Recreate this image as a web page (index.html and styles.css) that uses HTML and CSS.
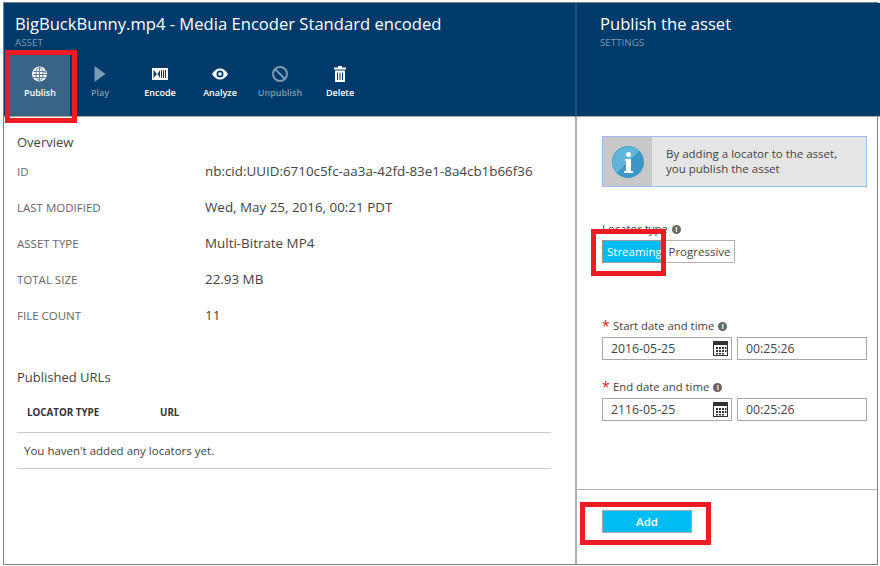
FILE: index.html
```html
<!DOCTYPE html>
<html>
<head>
<meta charset="utf-8"/>
<title>Publish the asset</title>
<link rel="stylesheet" href="styles.css">
</head>
<body>
<div class="frame">
  <section class="blade asset">
    <header class="head">
      <h1>BigBuckBunny.mp4 - Media Encoder Standard encoded</h1>
      <div class="sub">ASSET</div>
      <div class="cmds">
        <div class="cmd on">
          <svg width="20" height="18" viewBox="0 0 20 18"><circle cx="9.500" cy="9" r="7.500" fill="#fff"/><g fill="none" stroke="#5f7f9a" stroke-width="1"><ellipse cx="9.500" cy="9" rx="3.500" ry="6.500"/><path d="M9.500 2.500v13M3.500 6.500h12M3 9.500h13M3.500 12.500h12"/></g><path d="M15 4h2v3h2l-2.500 3.500L14 7h1z" fill="#3a6486"/><path d="M15.500 5.500h1v2.500h1l-1.500 1.500L14.500 8h1z" fill="#fff"/></svg>
          <span>Publish</span>
        </div>
        <div class="cmd off">
          <svg width="20" height="18" viewBox="0 0 20 18"><path d="M4.500 1l11 8-11 8z" fill="#7e9ab2"/></svg>
          <span>Play</span>
        </div>
        <div class="cmd">
          <svg width="20" height="18" viewBox="0 0 20 18"><path d="M2 3h16v12H2z" fill="#fff"/><path d="M3.500 5L7 9l-3.500 4zM10 5v8L7.500 9z" fill="#003b6b"/><path d="M11.500 5v8M13.500 5v8M15.500 5v8" stroke="#003b6b" stroke-width="1"/></svg>
          <span>Encode</span>
        </div>
        <div class="cmd">
          <svg width="20" height="18" viewBox="0 0 20 18"><path d="M2 9c2-3.500 4.800-5.500 8-5.500s6 2 8 5.500c-2 3.500-4.800 5.500-8 5.500S4 12.500 2 9z" fill="#fff"/><circle cx="10" cy="9" r="3.500" fill="#003b6b"/><circle cx="10" cy="9" r="1.800" fill="#fff"/></svg>
          <span>Analyze</span>
        </div>
        <div class="cmd off">
          <svg width="20" height="18" viewBox="0 0 20 18"><circle cx="10" cy="9" r="7" fill="none" stroke="#7e9ab2" stroke-width="2"/><path d="M5 4l10 10" stroke="#7e9ab2" stroke-width="2"/></svg>
          <span>Unpublish</span>
        </div>
        <div class="cmd">
          <svg width="20" height="18" viewBox="0 0 20 18"><path d="M8 1h4v1.500h4V4.500H4V2.500h4z" fill="#fff"/><path d="M5 5.500h10V17H5z" fill="#fff"/><path d="M7.500 7.500v7.500M10 7.500v7.500M12.500 7.500v7.500" stroke="#003b6b" stroke-width="1"/></svg>
          <span>Delete</span>
        </div>
      </div>
    </header>
    <div class="body">
      <h2>Overview</h2>
      <dl class="props">
        <div><dt>ID</dt><dd>nb:cid:UUID:6710c5fc-aa3a-42fd-83e1-8a4cb1b66f36</dd></div>
        <div><dt>LAST MODIFIED</dt><dd>Wed, May 25, 2016, 00:21 PDT</dd></div>
        <div><dt>ASSET TYPE</dt><dd>Multi-Bitrate MP4</dd></div>
        <div><dt>TOTAL SIZE</dt><dd>22.93 MB</dd></div>
        <div><dt>FILE COUNT</dt><dd>11</dd></div>
      </dl>
      <h2 class="urls">Published URLs</h2>
      <div class="thead"><span class="c1">LOCATOR TYPE</span><span>URL</span></div>
      <div class="empty">You haven't added any locators yet.</div>
    </div>
  </section>
  <section class="blade settings">
    <header class="head">
      <h1>Publish the asset</h1>
      <div class="sub">SETTINGS</div>
    </header>
    <div class="form">
      <div class="note">
        <div class="note-icon">
          <svg width="32" height="32" viewBox="0 0 32 32"><circle cx="16" cy="16" r="16" fill="#3b98c6"/><path d="M4.700 27.300A16 16 0 0 1 27.300 4.700z" fill="#5db5d9"/><circle cx="16.500" cy="8.500" r="2.500" fill="#fff"/><path d="M13 13h6v12h2v2h-9v-2h2V15h-1z" fill="#fff"/></svg>
        </div>
        <p>By adding a locator to the asset,<br>you publish the asset</p>
      </div>
      <div class="lbl type">Locator type <i class="tip">i</i></div>
      <div class="toggle"><span class="sel">Streaming</span><span>Progressive</span></div>
      <div class="lbl start"><b>*</b>Start date and time <i class="tip">i</i></div>
      <div class="when">
        <div class="box date">2016-05-25
          <svg width="15" height="15" viewBox="0 0 15 15"><use href="#cal"/></svg>
        </div>
        <div class="box">00:25:26</div>
      </div>
      <div class="lbl end"><b>*</b>End date and time <i class="tip">i</i></div>
      <div class="when">
        <div class="box date">2116-05-25
          <svg width="15" height="15" viewBox="0 0 15 15"><use href="#cal"/></svg>
        </div>
        <div class="box">00:25:26</div>
      </div>
    </div>
    <footer class="foot"><div class="add">Add</div></footer>
  </section>
</div>

<svg width="0" height="0" class="defs"><defs><g id="cal"><path d="M0 0h15v15H0z" fill="#333"/><path d="M1 4h13v10H1z" fill="#fff"/><path d="M3 6h2v2H3zM6 6h2v2H6zM9 6h2v2H9zM12 6h1.500v2H12zM3 9h2v2H3zM6 9h2v2H6zM9 9h2v2H9zM12 9h1.500v2H12zM3 12h2v1.500H3zM6 12h2v1.500H6zM9 12h2v1.500H9z" fill="#333"/></g></defs></svg>

<!-- red callouts drawn over the shot -->
<div class="mark m1"></div>
<div class="mark m2"></div>
<div class="mark m3"></div>
</body>
</html>
```
FILE: styles.css
```css
html, body {
   margin: 0;
   height: 566px;
   overflow: hidden;
   background: white;
   font-family: "Open Sans", "Noto Sans", sans-serif;
   font-size: 12px;
   color: #444;
}

.frame {
   position: relative;
   display: flex;
   box-sizing: border-box;
   width: 875px;
   height: 563px;
   margin: 2px 0 0 3px;
   border: 1px solid #7f7f7f;
}

.blade {
   display: flex;
   flex-direction: column;
}

.asset {
   width: 571px;
}

.settings {
   width: 300px;
   border-left: 2px solid #b0b0b0;
}

.head {
   box-sizing: border-box;
   height: 114px;
   background: #003b6b;
   border-bottom: 1px solid #a6a6a6;
   padding-top: 10px;
}

.settings .head {
   margin: 0 -3px 0 -2px;
   padding-left: 23px;
   border-left: 2px solid #1f5280;
}

.asset .head {
   padding-left: 11px;
}

h1 {
   margin: 0;
   font-size: 16.600px;
   line-height: 21px;
   font-weight: 400;
   color: white;
   white-space: nowrap;
}

.sub {
   font-size: 9.800px;
   line-height: 12px;
   margin-top: 3px;
   color: #7e9ab2;
}

.cmds {
   display: flex;
   margin: 3px 0 0 -5px;
}

.cmd {
   box-sizing: border-box;
   width: 60px;
   height: 64px;
   padding-top: 13px;
   display: flex;
   flex-direction: column;
   align-items: center;
   color: white;
   font-size: 9px;
   font-weight: 600;
}

.cmd span {
   margin-top: 3px;
}

.cmd.on {
   background: #3a6486;
}

.cmd.off {
   color: #7e9ab2;
}

.body {
   flex: 1;
   padding: 15px 24px 0 13px;
}

h2 {
   margin: 0;
   font-size: 13px;
   line-height: 20px;
   font-weight: 400;
   color: #444;
}

.props {
   margin: 0;
   padding-top: 1px;
}

.props div {
   display: flex;
   height: 36px;
   align-items: center;
}

.props dt {
   width: 188px;
   font-size: 11.500px;
   color: #666;
}

.props dd {
   margin: 0;
   font-size: 13.400px;
   white-space: nowrap;
}

.urls {
   margin-top: 34px;
}

.thead {
   display: flex;
   align-items: center;
   box-sizing: border-box;
   height: 46px;
   padding: 5px 0 0 10px;
   border-bottom: 1px solid #c8c8c8;
   font-size: 9.800px;
   font-weight: 700;
   color: #333;
}

.c1 {
   width: 133px;
}

.empty {
   height: 35px;
   line-height: 36px;
   padding-left: 7px;
   border-bottom: 1px solid #c8c8c8;
   font-size: 11.500px;
}

.form {
   flex: 1;
   padding: 19px 10px 0 25px;
}

.note {
   display: flex;
   align-items: center;
   box-sizing: border-box;
   height: 51px;
   border: 1px solid #9dbcf0;
   background: #e5e5e5;
}

.note-icon {
   display: flex;
   align-items: center;
   justify-content: center;
   width: 49px;
   height: 100%;
   background: #c8c8c8;
}

.note p {
   margin: 0 0 0 14px;
   font-size: 11.500px;
   line-height: 14.500px;
}

.lbl {
   display: flex;
   align-items: center;
   font-size: 11.300px;
   line-height: 16px;
}

.lbl b {
   color: #e81123;
   font-size: 14px;
   font-weight: 400;
   width: 11px;
}

.type {
   margin-top: 34px;
}

.start {
   margin-top: 55px;
}

.end {
   margin-top: 19px;
}

.tip {
   display: inline-block;
   width: 9px;
   height: 9px;
   margin-left: 4px;
   border-radius: 50%;
   background: #666;
   color: white;
   font: 700 7px/9px "Open Sans", sans-serif;
   text-align: center;
}

.toggle {
   display: flex;
   margin-top: 3px;
   height: 23px;
}

.toggle span {
   box-sizing: border-box;
   border: 1px solid #b0b0b0;
   border-left-width: 0;
   width: 74px;
   padding-left: 4px;
   line-height: 22px;
   text-align: center;
   font-size: 11.500px;
   white-space: nowrap;
}

.toggle .sel {
   width: 59px;
   border-left-width: 1px;
   border-color: #999;
   background: #00bcf2;
   color: white;
}

.when {
   display: flex;
   gap: 5px;
   margin-top: 3px;
}

.box {
   box-sizing: border-box;
   display: flex;
   align-items: center;
   justify-content: space-between;
   width: 130px;
   height: 23px;
   padding: 0 3px 0 8px;
   border: 1px solid #a8a8a8;
   font-size: 12.300px;
}

.foot {
   box-sizing: border-box;
   height: 75px;
   padding: 20px 0 0 25px;
   border-top: 1px solid #b0b0b0;
}

.add {
   box-sizing: border-box;
   width: 90px;
   height: 23px;
   border: 1px solid #a8a8a8;
   background: #00bcf2;
   color: white;
   font-weight: 600;
   font-size: 11.500px;
   line-height: 21px;
   text-align: center;
}

.defs {
   position: absolute;
}

.mark {
   position: absolute;
   box-sizing: border-box;
   border: 5px solid #ed1c24;
}

.m1 {
   left: 5px;
   top: 50px;
   width: 72px;
   height: 73px;
}

.m2 {
   left: 591px;
   top: 229px;
   width: 75px;
   height: 47px;
}

.m3 {
   left: 580px;
   top: 502px;
   width: 131px;
   height: 43px;
}
```
